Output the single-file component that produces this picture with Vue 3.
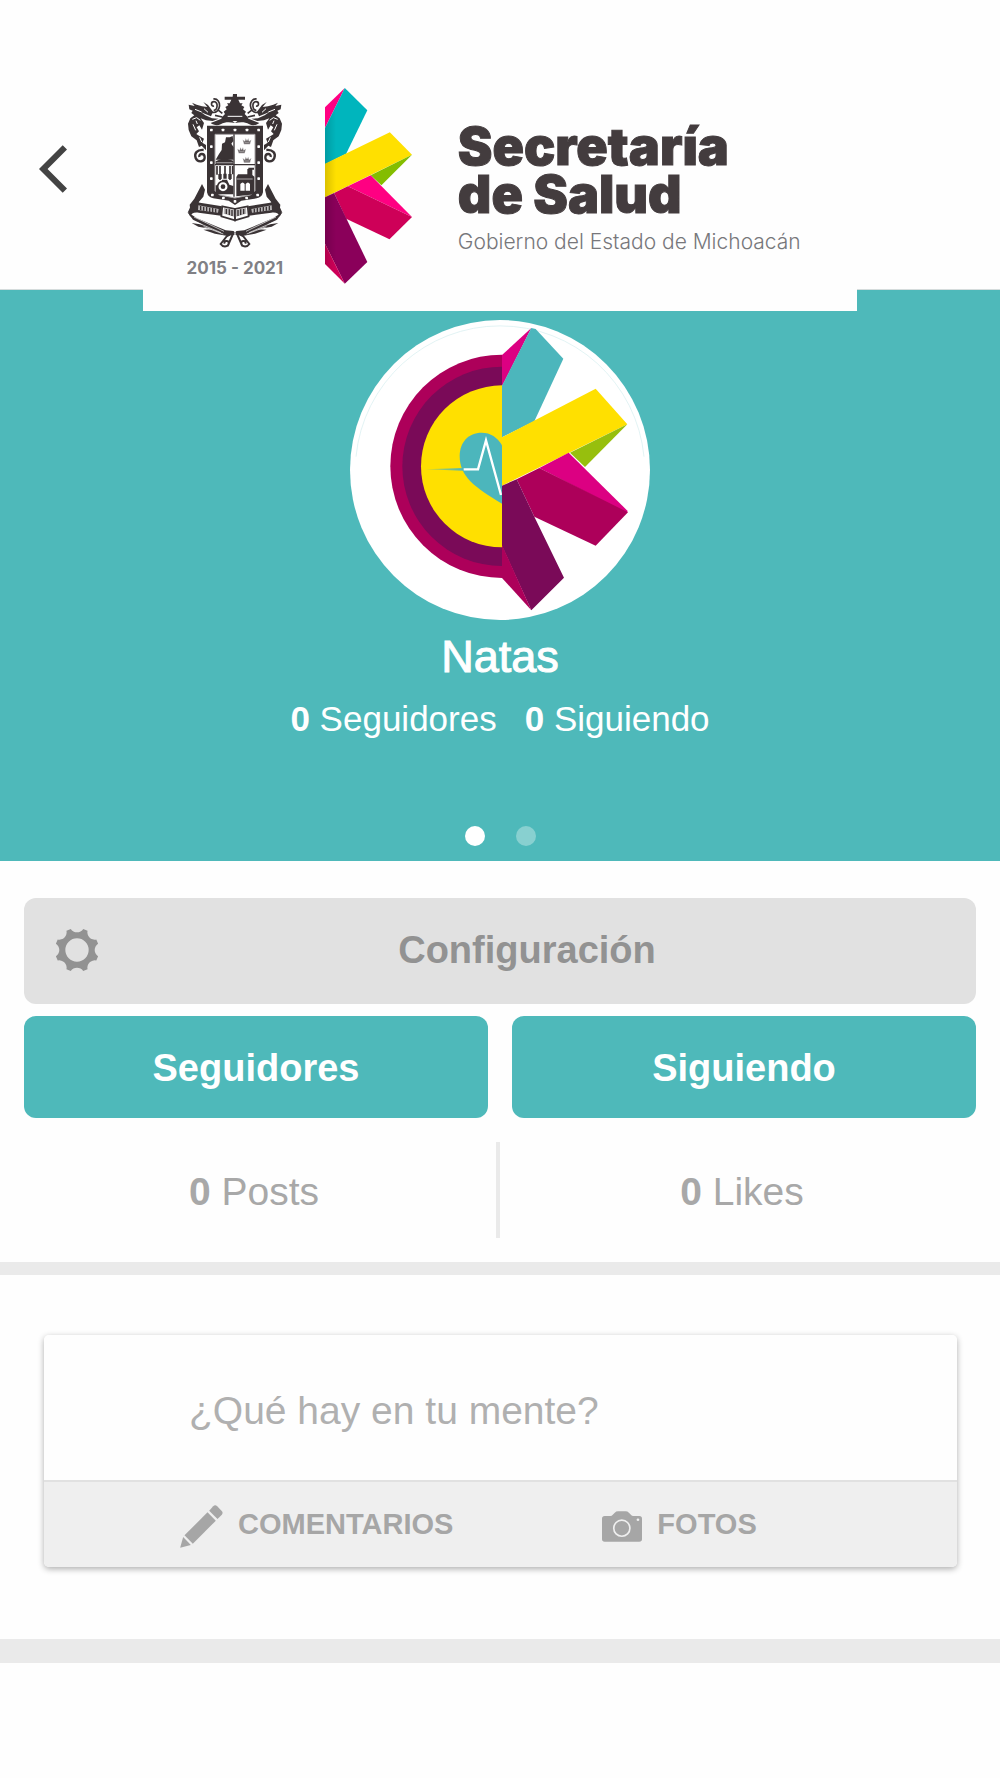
<script setup>
import { ref } from 'vue'

const post = ref('')

// Outline of the eight-toothed gear: flat teeth joined by concave notches.
const polar = (deg, r = 66) => {
  const a = (deg * Math.PI) / 180
  return `${(r * Math.cos(a)).toFixed(1)} ${(r * Math.sin(a)).toFixed(1)}`
}
const gearPath =
  'M' + polar(16.4) +
  Array.from({ length: 8 }, (_, k) => `L${polar(45 * k + 28.6)}A22 22 0 0 0 ${polar(45 * k + 61.4)}`).join('') +
  'Z M35 0A35 35 0 1 0 -35 0A35 35 0 1 0 35 0Z'

const mirrored = ['', 'translate(330 0) scale(-1 1)']
const studs = [
  [94, 120], [129, 120], [165, 120], [201, 120], [236, 120],
  [94, 170], [94, 218], [94, 266], [236, 170], [236, 218], [236, 266],
  [97, 315], [130, 324], [165, 334], [200, 324], [233, 315],
]
const crowns = [[201, 154], [185, 181], [201, 209]]
const counts = [
  { value: 0, label: 'Seguidores' },
  { value: 0, label: 'Siguiendo' },
]
const totals = [
  { value: 0, label: 'Posts' },
  { value: 0, label: 'Likes' },
]
</script>

<template>
  <div class="page">
    <header class="topbar">
      <button class="back" type="button" aria-label="Atrás">
        <svg width="28" height="48" viewBox="118 223 85 144">
          <path d="M118 295 190 223 203 236 144 295 203 354 190 367Z" fill="#434343" />
        </svg>
      </button>
      <div class="brand">
        <div class="crest">
          <svg width="96" height="154" viewBox="21 12 288 462" fill="#3a3335">
            <!-- tower -->
            <path d="M159 12h12v8h24v9h-20l5 11h8l-4 6 9 5-4 7 9 7-4 7 9 9 3 12h-83l3-12 9-9-4-7 9-7-4-7 9-5-4-6h8l5-11h-20v-9h24Z" />
            <path d="M143 79h44" stroke="#fff" stroke-width="3" />
            <g v-for="(m, i) in mirrored" :key="i" :transform="m || undefined">
              <!-- foliage -->
              <path d="M26 44 44 48 36 38 50 44 66 49 82 51 70 36 84 45 99 65 93 79 76 72 62 66 76 76 96 85 116 86 98 93 78 91 62 85 72 99 66 119 58 106 50 112 57 124 49 132 57 137 72 146 67 158 78 165 78 181 65 167 57 171 50 151 34 139 26 120 24 101 31 85 43 76 34 69 38 62 28 58Z" />
              <path d="M45 58 65 66M37 88 50 83 61 91M39 103 47 121M48 92 52 102M59 142 65 156M72 56 84 67" fill="none" stroke="#fff" stroke-width="3" />
              <path d="M101 61c12 0 15-26 1-26-10 0-10 15 0 13M96 67c28 5 31-43 4-40M112 58l15 12M105 76l22 5" fill="none" stroke="#3a3335" stroke-width="5" />
              <path d="M71 180c-21-2-29 11-24 24 6 15 28 12 27-3-1-13-18-11-16 0" fill="none" stroke="#3a3335" stroke-width="7" />
              <path d="M128 85c14 0 26 4 37 14-17-3-29-4-43 4-11 5-22 2-30-4Z" />
              <!-- ribbon -->
              <path d="M66 282 75 299 70 320 57 335 52 350 31 361 29 344 43 326Z" />
              <path d="M31 350c5-13 15-16 29-12l66 11-3 28-67-9c-16-2-22 3-25 12l-7-14Z" />
              <path d="M55 346 116 357 114 368 54 360ZM132 353 165 361V381L131 371Z" fill="#b8b5b6" />
              <path d="M127 349 165 357V391L124 379Z" fill="none" stroke="#3a3335" stroke-width="5" />
              <path d="M62 348v12M71 350v12M80 351v13M89 353v13M98 354v13M107 356v12M139 357v15M148 358v17M156 360v18" stroke="#3a3335" stroke-width="4" />
              <!-- branches -->
              <path d="M22 366 50 384 92 402 137 421 160 423 164 434 139 437 105 431 70 419 98 418 55 410 35 399 70 404 39 389Z" />
              <path d="M42 381 132 424M50 397 123 428M71 410 130 432" stroke="#fff" stroke-width="2" />
              <path d="M163 426 141 438 122 462c7 11 27 9 24-4-2-9-16-5-12 3M160 429 143 468" fill="none" stroke="#3a3335" stroke-width="6" />
            </g>
            <!-- shield -->
            <path d="M81 107H249V307Q246 322 230 325L184 332 165 345 146 332 100 325Q84 322 81 307Z" />
            <path d="M105 133H225V303L211 315 165 324 119 315 105 303Z" fill="#fff" stroke="#a7a3a4" stroke-width="3" />
            <path d="M162 133V320M105 224H225" stroke="#3a3335" stroke-width="4" />
            <rect v-for="([x, y], i) in studs" :key="'s' + i" :x="x - 4" :y="y - 4" width="8" height="8" rx="2" fill="#fff" />
            <path d="M149 142l9-4 2 15-6 8 7 11v37h-54l10-17 8-12 1-19 9-4 3-15Z" />
            <path d="M107 214 132 203 160 212V222H107Z" />
            <path d="M109 218H158" stroke="#8f8a8c" stroke-width="4" />
            <path v-for="([x, y], i) in crowns" :key="'c' + i" :transform="`translate(${x} ${y})`" d="M-13-5-6 0-4-9 0-2 4-9 6 0 13-5 9 9H-9ZM-7 4H7" stroke="#fff" stroke-width="1" fill="#6c6668" />
            <path d="M111 228v26M120 228v42M135 228v34M150 228v42M158 228v25" stroke="#3a3335" stroke-width="5" />
            <path d="M115 252h10v15h-10ZM130 251h10v15h-10ZM145 252h10v15h-10ZM107 286h12l8-17h14l7 15 12 4v25H107Z" />
            <circle cx="129" cy="290" r="16" fill="#fff" stroke="#3a3335" stroke-width="5" />
            <circle cx="129" cy="290" r="7" />
            <path d="M174 253h28v-16h15v18l6 5v50l-12 4-42 5v-58ZM205 233h17v6h-17Z" />
            <path d="M170 267H218" stroke="#aaa6a7" stroke-width="3" />
            <path d="M181 302V282q7-9 13 0v20ZM197 302V282q7-9 13 0v20Z" fill="#fff" />
          </svg>
          <span class="years">2015 - 2021</span>
        </div>
        <svg class="mark" width="87" height="196" viewBox="77 55 259 588" preserveAspectRatio="none">
          <defs>
            <linearGradient id="fold" x1="0" x2="1">
              <stop offset="0" stop-color="#000" stop-opacity="0.14" />
              <stop offset="1" stop-color="#000" stop-opacity="0" />
            </linearGradient>
          </defs>
          <path d="M77 113 136 55 77 175Z" fill="#ff0082" />
          <path d="M136 55 203 122 140 252 77 284V175Z" fill="#00b5bd" />
          <path d="M77 282 270 188 336 255 77 383Z" fill="#ffe000" />
          <path d="M336 255 245 347 213 317Z" fill="#84bd00" />
          <path d="M213 317 336 442 145 350Z" fill="#ff0082" />
          <path d="M104 370 145 350 336 442 269 509 140 447Z" fill="#ce0058" />
          <path d="M77 383 104 370 203 577 136 642 77 522Z" fill="#8a005a" />
          <path d="M77 522 136 642 77 583Z" fill="#ce0058" />
          <path d="M77 175 110 110V610L77 583Z" fill="url(#fold)" />
        </svg>
        <div class="brand-text">
          <h1>Secretaría<br />de Salud</h1>
          <p>Gobierno del Estado de Michoacán</p>
        </div>
      </div>
    </header>

    <section class="profile">
      <svg class="avatar" width="300" height="300" viewBox="30 30 900 900" role="img" aria-label="Foto de perfil">
        <defs>
          <clipPath id="half"><path d="M130 120H486V820H130Z" /></clipPath>
          <linearGradient id="pulse" x1="0" x2="1">
            <stop offset="0" stop-color="#4cb6bc" stop-opacity="0.3" />
            <stop offset="1" stop-color="#4cb6bc" />
          </linearGradient>
        </defs>
        <circle cx="480" cy="480" r="450" fill="#fff" />
        <path d="M48 440A434 434 0 0 1 912 440" fill="none" stroke="#d3edee" stroke-width="2" />
        <g clip-path="url(#half)">
          <circle cx="486" cy="469" r="335" fill="#ad005a" />
          <circle cx="486" cy="469" r="299" fill="#7a0a58" />
          <circle cx="486" cy="469" r="243" fill="#ffe000" />
          <path d="M486 406C472 382 452 368 425 368 385 368 359 397 359 438 359 500 404 532 486 581Z" fill="#4cb6bc" />
          <path d="M255 478 372 474V482Z" fill="url(#pulse)" />
          <path d="M371 478H414L438 391 483 555" fill="none" stroke="#fff" stroke-width="7" />
        </g>
        <path d="M486 135 574 54 486 229Z" fill="#dc0082" />
        <path d="M574 54 587 57 670 146 583 334 486 382V227Z" fill="#4cb6bc" />
        <path d="M486 382 767 236 862 343 486 527Z" fill="#ffe000" />
        <path d="M862 343 735 471 690 428Z" fill="#97bf0d" />
        <path d="M686 428 863 603 860 609 598 474Z" fill="#dc0082" />
        <path d="M530 508 598 474 864 607 767 707 583 620Z" fill="#ad005a" />
        <path d="M486 527 530 508 583 620 672 803 574 901 486 708Z" fill="#7a0a58" />
        <path d="M486 704 574 901 486 804Z" fill="#ad005a" />
      </svg>
      <h2>Natas</h2>
      <div class="counts">
        <span v-for="c in counts" :key="c.label"><b>{{ c.value }}</b> {{ c.label }}</span>
      </div>
      <div class="pager">
        <button class="dot current" type="button" aria-label="Página 1"></button>
        <button class="dot" type="button" aria-label="Página 2"></button>
      </div>
    </section>

    <section class="actions">
      <button class="settings" type="button">
        <svg width="44" height="44" viewBox="-66 -66 132 132">
          <path :d="gearPath" fill="#929292" fill-rule="evenodd" />
        </svg>
        <span>Configuración</span>
      </button>
      <div class="pair">
        <button type="button">Seguidores</button>
        <button type="button">Siguiendo</button>
      </div>
    </section>

    <section class="totals">
      <div v-for="t in totals" :key="t.label" class="total">
        <span><b>{{ t.value }}</b> {{ t.label }}</span>
      </div>
    </section>

    <section class="composer">
      <form class="card" @submit.prevent>
        <input v-model="post" type="text" placeholder="¿Qué hay en tu mente?" aria-label="¿Qué hay en tu mente?" />
        <div class="tools">
          <button type="button">
            <svg width="43" height="43" viewBox="541 586 128 129" fill="#a6a6a6">
              <path d="M628 603 640 590Q646 584 652 590L665 603Q671 609 666 615L653 628Z" />
              <path d="M623 608 648 633 579 702 554 677Z" />
              <path d="M550 682 573 706 541 714Z" />
            </svg>
            COMENTARIOS
          </button>
          <button type="button">
            <svg width="40" height="31" viewBox="309 605 119 92" fill="#a6a6a6">
              <path d="M317 620H334Q338 620 341 616L347 610Q351 606 357 606H379Q385 606 389 610L395 616Q398 620 402 620H420Q428 620 428 628V688Q428 696 420 696H317Q309 696 309 688V628Q309 620 317 620Z" />
              <circle cx="368" cy="656" r="24" fill="none" stroke="#efefef" stroke-width="5" />
              <circle cx="416" cy="631" r="4" fill="#efefef" />
            </svg>
            FOTOS
          </button>
        </div>
      </form>
    </section>
  </div>
</template>

<style>
body {
  background: #fefefe;
}
</style>

<style scoped>
.page {
  font-family: "Liberation Sans", Arial, sans-serif;
  color: #a8a8a8;
}

button {
  border: 0;
  padding: 0;
  background: none;
  font: inherit;
  color: inherit;
  cursor: pointer;
}

svg {
  display: block;
  flex: none;
}

h1,
h2,
p {
  margin: 0;
}

.topbar {
  display: grid;
  grid-template-columns: 1fr 5fr 1fr;
  margin-bottom: -22px;
}

.back {
  padding: 26px 0 0 39px;
}

.brand {
  position: relative;
  display: flex;
  align-items: flex-start;
  padding: 88px 0 27px 44px;
  background: #fefefe;
}

.crest {
  display: flex;
  flex-direction: column;
  align-items: center;
  width: 96px;
  padding-top: 6px;
}

.years {
  padding-top: 8px;
  font: 700 17px/24px Inter, sans-serif;
  color: #808085;
  white-space: nowrap;
}

.mark {
  margin: 0 46px 0 42px;
}

.brand-text {
  padding-top: 35px;
  font-family: Inter, sans-serif;
  white-space: nowrap;
}

.brand-text h1 {
  font-size: 52px;
  line-height: 48px;
  font-weight: 900;
  color: #433c3e;
  -webkit-text-stroke: 1px #433c3e;
}

.brand-text p {
  padding-top: 9px;
  font-size: 21px;
  line-height: 28px;
  font-weight: 300;
  color: #77777b;
}

.profile {
  display: flex;
  flex-direction: column;
  align-items: center;
  padding: 30px 0 15px;
  border-top: 1px solid #d5dcdc;
  background: #4eb9ba;
  color: #fff;
}

.profile h2 {
  padding-top: 10px;
  font-size: 45px;
  line-height: 54px;
  font-weight: 400;
  -webkit-text-stroke: 1px #fff;
}

.counts {
  display: flex;
  gap: 28px;
  padding-top: 14px;
  font-size: 35px;
  line-height: 42px;
}

.pager {
  display: flex;
  gap: 31px;
  padding-top: 86px;
}

.dot {
  width: 20px;
  height: 20px;
  border-radius: 50%;
  background: #88d0d0;
}

.dot.current {
  background: #fff;
}

.actions {
  display: flex;
  flex-direction: column;
  gap: 12px;
  padding: 37px 24px 24px;
  font-size: 38px;
  font-weight: 700;
}

.settings {
  display: flex;
  align-items: center;
  height: 106px;
  padding: 0 21px 2px 31px;
  border-radius: 12px;
  background: #e1e1e1;
  color: #929292;
}

.settings span {
  flex: 1;
}

.pair {
  display: flex;
  gap: 24px;
}

.pair button {
  flex: 1;
  height: 102px;
  padding-top: 2px;
  border-radius: 12px;
  background: #4eb9ba;
  color: #fff;
}

.totals {
  display: flex;
  padding: 0 16px 24px 12px;
  border-bottom: 13px solid #eaeaea;
  font-size: 39px;
}

.total {
  flex: 1;
  padding-top: 4px;
  line-height: 92px;
  text-align: center;
}

.total:first-child {
  border-right: 4px solid #eaeaea;
}

.composer {
  padding: 60px 43px 72px 44px;
  border-bottom: 24px solid #eaeaea;
}

.card {
  border-radius: 5px;
  overflow: hidden;
  box-shadow: 0 2px 6px rgba(0, 0, 0, 0.32);
}

.card input {
  display: block;
  box-sizing: border-box;
  width: 100%;
  height: 145px;
  padding: 6px 24px 0 145px;
  border: 0;
  background: #fefefe;
  font: inherit;
  font-size: 39px;
  color: #777;
}

.card input::placeholder {
  color: #b0b0b0;
  opacity: 1;
}

.tools {
  display: flex;
  gap: 149px;
  height: 85px;
  padding-left: 136px;
  border-top: 2px solid #e1e1e1;
  background: #efefef;
  font-size: 29px;
  font-weight: 700;
  color: #a6a6a6;
}

.tools button {
  display: flex;
  align-items: center;
  gap: 15px;
}

.tools svg {
  margin-top: 4px;
}
</style>
